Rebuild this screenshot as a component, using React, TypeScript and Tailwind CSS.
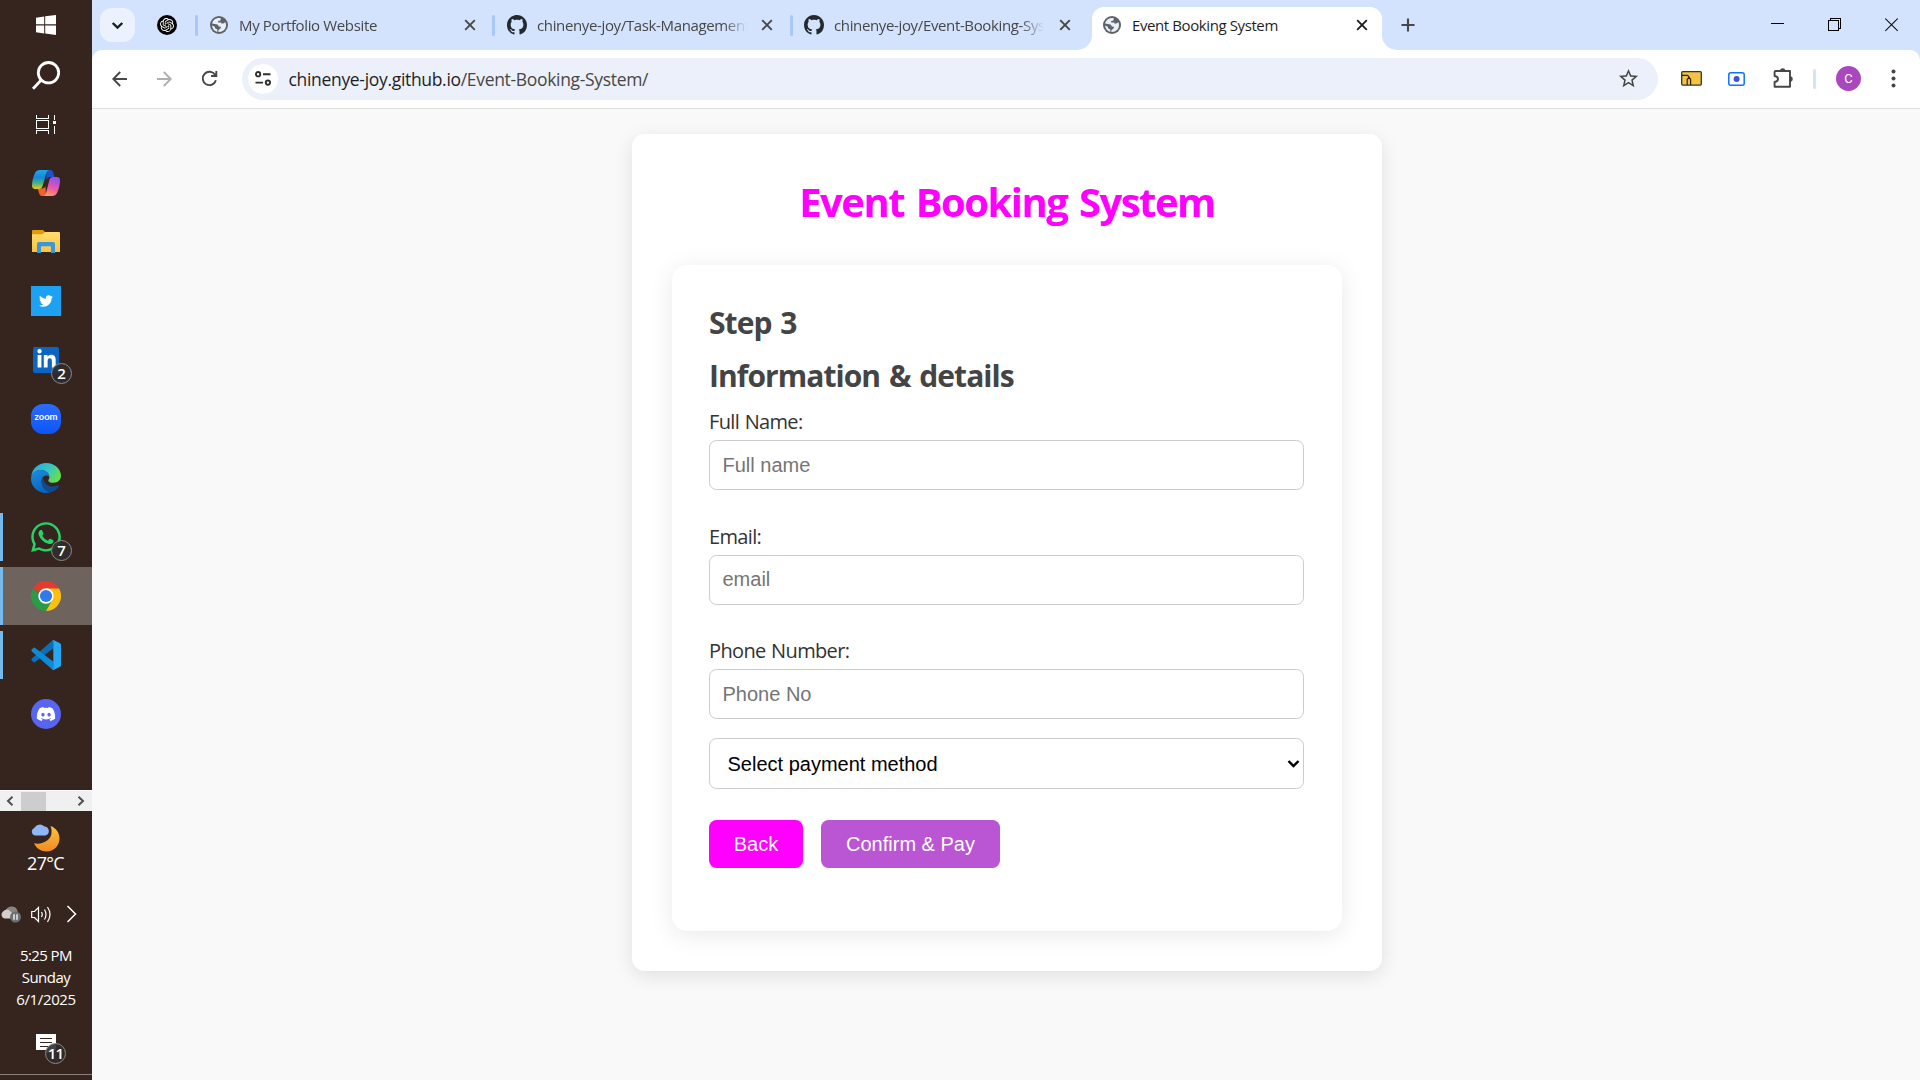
import type { ReactNode } from "react";
import { FaDiscord, FaLinkedinIn, FaTwitter, FaWhatsapp } from "react-icons/fa";
import { MdStarBorder } from "react-icons/md";
import { SiOpenai } from "react-icons/si";

function GlobeIcon() {
  return (
    <svg width="18" height="18" viewBox="0 0 18 18">
      <circle cx="9" cy="9" r="9" fill="#5f6368" />
      <path
        d="M10.6 2.1C6.6 1.3 3 3.600 2.100 7.500L6.300 8.300C7.900 8.600 8.600 9.400 8.700 10.500L10.900 10.800V12.100L8.400 14.200V16C13 16.200 16 13 16 9C16 7.900 15.700 6.900 15.300 6C13.900 7.300 12.900 7.900 11.300 7.400V6.600H8.200V5.100L10.600 4.600ZM2 9.600C2.400 13 4.400 15.200 7.300 15.900V13.500L4.900 12.300V10.800Z"
        fill="#e9effa"
      />
    </svg>
  );
}

function GithubMark() {
  return (
    <svg width="20" height="20" viewBox="0 0 16 16" fill="#24292f">
      <path d="M8 0c4.42 0 8 3.58 8 8a8.013 8.013 0 0 1-5.45 7.59c-.4.08-.55-.17-.55-.38 0-.27.01-1.13.01-2.2 0-.75-.25-1.23-.54-1.48 1.78-.2 3.65-.88 3.65-3.95 0-.88-.31-1.59-.82-2.15.08-.2.36-1.02-.08-2.12 0 0-.67-.22-2.2.82-.64-.18-1.32-.27-2-.27-.68 0-1.36.09-2 .27-1.53-1.03-2.2-.82-2.2-.82-.44 1.1-.16 1.92-.08 2.12-.51.56-.82 1.28-.82 2.15 0 3.06 1.86 3.75 3.64 3.95-.23.2-.44.55-.51 1.07-.46.21-1.61.55-2.33-.66-.15-.24-.6-.83-1.23-.82-.67.01-.27.38.01.53.34.19.73.9.82 1.13.16.45.68 1.31 2.69.94 0 .67.01 1.3.01 1.49 0 .21-.15.45-.55.38A7.995 7.995 0 0 1 0 8c0-4.42 3.58-8 8-8Z" />
    </svg>
  );
}

function CloseIcon({ color = "#474747" }: { color?: string }) {
  return (
    <svg width="20" height="20" viewBox="0 0 20 20" stroke={color} strokeWidth="1.9">
      <path d="M5.2 5.200 14.800 14.800M14.800 5.200 5.200 14.800" />
    </svg>
  );
}

function TabDivider() {
  return <div className="h-[21px] w-[3px] shrink-0 rounded-full bg-[#a8c7fa]" />;
}

function Tab({ icon, title, className }: { icon: ReactNode; title: string; className: string }) {
  return (
    <div className={`flex h-full shrink-0 items-center ${className}`}>
      <div className="flex w-5 shrink-0 justify-center">{icon}</div>
      <div className="ml-[10px] w-[210px] overflow-hidden text-[15px] leading-5 tracking-[-0.36px] whitespace-nowrap text-[#474747] [mask-image:linear-gradient(to_right,black_89%,transparent_100%)]">
        {title}
      </div>
      <div className="ml-auto">
        <CloseIcon />
      </div>
    </div>
  );
}

function TabStrip() {
  return (
    <div className="flex h-[50px] items-center bg-[#d3e3fd] pl-2">
      <div className="flex h-[34px] w-[35px] items-center justify-center rounded-[12px] bg-[#ebf2fe]">
        <svg width="13" height="9" viewBox="0 0 13 9" fill="none" stroke="#1f1f1f" strokeWidth="2.400">
          <path d="M1.700 2 6.500 6.600 11.300 2" />
        </svg>
      </div>
      <div className="mr-[18px] ml-[22px] flex size-5 items-center justify-center rounded-full bg-black">
        <SiOpenai size={14} color="#fff" />
      </div>
      <TabDivider />
      <Tab className="w-[294px] pr-[12px] pl-[11px]" icon={<GlobeIcon />} title="My Portfolio Website" />
      <TabDivider />
      <Tab className="w-[295px] pr-[13px] pl-[12px]" icon={<GithubMark />} title="chinenye-joy/Task-Management" />
      <TabDivider />
      <Tab className="w-[299px] pr-[17px] pl-[11px]" icon={<GithubMark />} title="chinenye-joy/Event-Booking-System" />
      <div className="relative flex h-[43px] w-[290px] shrink-0 items-center self-end rounded-t-[12px] bg-white px-[10px] pb-[7px]">
        <svg className="absolute bottom-0 -left-[15px]" width="15" height="15" viewBox="0 0 15 15" fill="#fff">
          <path d="M15 0A15 15 0 0 1 0 15H15Z" />
        </svg>
        <svg className="absolute -right-[15px] bottom-0" width="15" height="15" viewBox="0 0 15 15" fill="#fff">
          <path d="M0 0A15 15 0 0 0 15 15H0Z" />
        </svg>
        <div className="flex w-5 justify-center">
          <GlobeIcon />
        </div>
        <div className="ml-[10px] text-[15px] leading-5 tracking-[-0.4px] whitespace-nowrap text-[#1f1f1f]">
          Event Booking System
        </div>
        <div className="ml-auto">
          <CloseIcon color="#1f1f1f" />
        </div>
      </div>
      <svg className="ml-[19px]" width="14" height="14" viewBox="0 0 14 14" stroke="#474747" strokeWidth="2.100">
        <path d="M7 .5V13.500M.5 7H13.500" />
      </svg>
      <div className="mr-[22px] ml-auto flex items-center gap-[44px]">
        <svg width="13" height="14" viewBox="0 0 13 14" shapeRendering="crispEdges">
          <path d="M0 5H13V6H0Z" fill="#000" />
        </svg>
        <svg width="13" height="14" viewBox="0 0 13 14" fill="none" stroke="#000" shapeRendering="crispEdges">
          <path d="M.5 2.500H10.500V12.500H.5ZM2.500 2.500V.5H12.500V10.500H10.500" />
        </svg>
        <svg width="13" height="14" viewBox="0 0 13 14" stroke="#000" strokeWidth="1.050">
          <path d="M.3.500 12.700 12.900M12.700.500.3 12.900" />
        </svg>
      </div>
    </div>
  );
}

function Toolbar() {
  return (
    <div className="bg-[#d3e3fd]">
      <div className="flex h-[59px] items-center rounded-t-[10px] border-b border-[#dfdfdf] bg-white pb-px pl-5">
        <svg width="15" height="16" viewBox="0 0 15 16" fill="none" stroke="#474747" strokeWidth="1.900">
          <path d="M15 8H1.500M8.200 1 1.300 8 8.200 15" />
        </svg>
        <svg className="ml-[30px]" width="15" height="16" viewBox="0 0 15 16" fill="none" stroke="#b0b0b0" strokeWidth="1.900">
          <path d="M0 8H13.500M6.800 1 13.700 8 6.800 15" />
        </svg>
        <svg className="ml-[29px]" width="17" height="17" viewBox="0 0 17 17" fill="none" stroke="#474747" strokeWidth="1.900">
          <path d="M14.900 10.200A6.700 6.700 0 1 1 14.200 5M15.300.900V6H10" />
        </svg>
        <div className="ml-6 flex h-[42px] w-[1416px] shrink-0 items-center rounded-full bg-[#ecf0fa] pr-[18px] pl-[6px]">
          <div className="flex size-[30px] items-center justify-center rounded-full bg-white">
            <svg width="16" height="15" viewBox="0 0 16 15" fill="none" stroke="#303030" strokeWidth="1.900">
              <circle cx="3.100" cy="3.200" r="2.150" />
              <path d="M8 3.200H15.500M.5 11.600H8" />
              <circle cx="12.900" cy="11.600" r="2.150" />
            </svg>
          </div>
          <div className="ml-[10.5px] text-[17.5px] leading-6 tracking-[-0.32px] text-[#474747]">
            <span className="text-[#1f1f1f]">chinenye-joy.github.io</span>/Event-Booking-System/
          </div>
          <MdStarBorder className="ml-auto" size={23} color="#474747" />
        </div>
        <svg className="ml-[23px]" width="21" height="15" viewBox="0 0 21 15">
          <rect x=".7" y=".7" width="19.600" height="13.400" rx="1" fill="#f5c242" stroke="#333" strokeWidth="1.300" />
          <path d="M1 4.400H6.500L8.200 6M6.200 14V8.500L8 6.300 9.600 8.500V14" fill="none" stroke="#222" strokeWidth="1.200" />
        </svg>
        <svg className="ml-[26px]" width="17" height="14" viewBox="0 0 17 14">
          <rect x=".8" y=".8" width="15.400" height="12.400" rx="2" fill="#fff" stroke="#0b72ff" strokeWidth="1.500" />
          <circle cx="8.600" cy="7" r="3" fill="#3f51d8" />
        </svg>
        <svg className="ml-[27px] -translate-y-px" width="22" height="22" viewBox="0 0 22 22">
          <path
            d="M3.500 4H18V19.800H2.600V15C5.400 14.600 6 13.200 6 12C6 10.700 5.200 9.300 2.600 9V4.900Q2.600 4 3.500 4Z"
            fill="none"
            stroke="#474747"
            strokeWidth="1.900"
            strokeLinejoin="round"
          />
          <path d="M8 4A2.700 2.700 0 0 1 13.400 4ZM18 9.300A2.700 2.700 0 0 1 18 14.700Z" fill="#474747" />
        </svg>
        <div className="ml-[19px] h-5 w-[3px] rounded-full bg-[#d3e3fd]" />
        <div className="ml-5 flex size-[25px] items-center justify-center rounded-full bg-[#ab47bc] font-['Roboto'] text-[13px] text-white">
          C
        </div>
        <svg className="ml-[30px]" width="5" height="19" viewBox="0 0 5 19" fill="#474747">
          <circle cx="2.500" cy="2.600" r="2" />
          <circle cx="2.500" cy="9.500" r="2" />
          <circle cx="2.500" cy="16.400" r="2" />
        </svg>
      </div>
    </div>
  );
}

function Badge({ children, className }: { children: ReactNode; className: string }) {
  return (
    <span
      className={`absolute flex size-[21px] items-center justify-center rounded-full border border-[#8c8a88] bg-[#2f2d2c]/90 text-[15px] leading-none font-semibold text-white ${className}`}
    >
      {children}
    </span>
  );
}

function Slot({ children, active, running }: { children: ReactNode; active?: boolean; running?: boolean }) {
  return (
    <div className="relative flex h-[59px] w-full shrink-0 items-center justify-center">
      {active && <div className="absolute inset-x-0 top-px bottom-0 bg-[#6f645d]" />}
      {running && (
        <div className={`absolute left-0 w-[3px] bg-[#76b9ed] ${active ? "top-px bottom-0" : "top-[6px] bottom-[5px]"}`} />
      )}
      {children}
    </div>
  );
}

function Taskbar() {
  return (
    <aside className="flex h-[1080px] w-[92px] shrink-0 flex-col items-center overflow-hidden bg-[#36251e] text-white">
      <div className="flex h-[50px] items-center">
        <svg width="20" height="20" viewBox="0 0 20 20" fill="#fff">
          <path d="M0 2.700 8.200 1.500V9.300H0ZM9.200 1.300 20 0V9.300H9.200ZM0 10.400H8.200V18.400L0 17.300ZM9.200 10.400H20V20L9.200 18.600Z" />
        </svg>
      </div>
      <div className="flex h-[50px] items-center">
        <svg width="28" height="29" viewBox="0 0 28 29" fill="none" stroke="#fff" strokeWidth="2.800">
          <circle cx="16.500" cy="11.700" r="10.200" />
          <path d="M9.300 19 1 27.800" />
        </svg>
      </div>
      <div className="flex h-[49px] items-center">
        <svg width="20" height="19" viewBox="0 0 20 19" fill="none" stroke="#fff" shapeRendering="crispEdges">
          <path d="M.5 0V3.500H12.500V0M.5 5.500H12.500V13.500H.5ZM.5 19V15.500H12.500V19M18.500 0V4.500M18.500 10.500V19" />
          <path d="M17 6H20V9H17Z" fill="#fff" stroke="none" />
        </svg>
      </div>
      <div className="h-1 shrink-0" />
      <Slot>
        <svg width="28" height="28" viewBox="0 0 28 28">
          <defs>
            <linearGradient id="cpA" x1="0" y1="0" x2="0" y2="1">
              <stop offset="0" stopColor="#1ba8ee" />
              <stop offset=".4" stopColor="#1388d8" />
              <stop offset=".7" stopColor="#4db37c" />
              <stop offset="1" stopColor="#f2c811" />
            </linearGradient>
            <linearGradient id="cpB" x1=".3" y1="0" x2="0" y2="1">
              <stop offset="0" stopColor="#9a50ec" />
              <stop offset=".5" stopColor="#ee5aa0" />
              <stop offset="1" stopColor="#ffac55" />
            </linearGradient>
          </defs>
          <path d="M14 1H18C20 1 20.800 2.200 21.300 4L22.500 8H18C16 8 15.200 9 14.600 11Z" fill="#1a54c8" />
          <path d="M14 27H10C8.400 27 7.500 26 7 24L5.800 19.500H10C12 19.500 13 18.500 13.500 17Z" fill="#f4602d" />
          <path d="M8 1H17.500C15.500 1 14.800 2.500 14.200 4.500L10.600 17C10 19 9 20 7 20H3C1 20 0 18.500 0 16.500C0 12.500 1.300 7.500 3 4C4 2 5.500 1 8 1Z" fill="url(#cpA)" />
          <path d="M20 27H11C13 27 13.600 25.500 14.200 23.500L17.400 11C18 9 19 8 21 8H25C27 8 28 9.500 28 11.500C28 15.500 26.700 20.500 25 24C24 26 22.500 27 20 27Z" fill="url(#cpB)" />
        </svg>
      </Slot>
      <Slot>
        <svg width="28" height="23" viewBox="0 0 28 23">
          <defs>
            <linearGradient id="folder" x1="0" y1="0" x2="0" y2="1">
              <stop offset="0" stopColor="#ffdc6e" />
              <stop offset="1" stopColor="#f8c441" />
            </linearGradient>
          </defs>
          <path d="M0 1Q0 0 1 0H11L13.500 2.500 11 5H0Z" fill="#e09b06" />
          <path d="M0 4.300H10.500L13 2H27Q28 2 28 3V22H0Z" fill="url(#folder)" />
          <path d="M5 23V14Q5 12 7 12H21Q23 12 23 14V23H19V17Q19 16.300 18.300 16.300H9.700Q9 16.300 9 17V23Z" fill="#3a96dd" />
        </svg>
      </Slot>
      <Slot>
        <div className="flex size-[30px] items-center justify-center bg-[#1da1f2]">
          <FaTwitter size={14} color="#fff" />
        </div>
      </Slot>
      <Slot>
        <div className="flex size-[26px] items-center justify-center rounded-[2px] bg-[#0a66c2]">
          <FaLinkedinIn size={21} color="#fff" />
        </div>
        <Badge className="top-[33px] left-[51px]">2</Badge>
      </Slot>
      <Slot>
        <div className="flex size-[30px] items-center justify-center rounded-[12px] bg-gradient-to-b from-[#2b6cff] to-[#0b55f5] pb-[3px] font-['Lato'] text-[9.5px] leading-none font-bold">
          zoom
        </div>
      </Slot>
      <Slot>
        <svg width="30" height="30" viewBox="0 0 30 30">
          <defs>
            <linearGradient id="edA" x1="0" y1=".2" x2="1" y2=".7">
              <stop offset="0" stopColor="#2ba9e0" />
              <stop offset=".5" stopColor="#35c6c4" />
              <stop offset="1" stopColor="#6ee03f" />
            </linearGradient>
            <linearGradient id="edB" x1="0" y1="0" x2=".4" y2="1">
              <stop offset="0" stopColor="#1a8fe0" />
              <stop offset="1" stopColor="#0c65bd" />
            </linearGradient>
          </defs>
          <path d="M.3 13C1.200 5.500 7.500 0 15 0C23.500 0 30 6 30 12.800C30 17 26.600 19.800 22.600 19.800C19.500 19.800 17.300 18.700 17.300 17.400C17.300 16.500 18.400 16.200 18.400 14.400C18.400 10 14.500 7 9.500 7C5.500 7 2 9.300.3 13Z" fill="url(#edA)" />
          <path d="M15 30C6.500 30 0 23.500 0 15.500C0 10.300 4.200 7 9.500 7C14.300 7 18.400 9.800 18.400 14C16.800 11.700 12.500 12 11 15.500C9.500 19.500 11.500 27 19.500 29.300C18.200 29.800 16.500 30 15 30Z" fill="url(#edB)" />
          <path d="M12.400 13.400C8.500 19 12 28 19.500 29.300C23 28.500 26.300 26 28 23C28.300 22.300 27.700 22 27.100 22.300C19.500 25.800 12 21.500 12.400 13.400Z" fill="#0d4c94" />
        </svg>
      </Slot>
      <Slot running>
        <FaWhatsapp size={34} color="#25d366" />
        <Badge className="top-[33px] left-[51px]">7</Badge>
      </Slot>
      <Slot active running>
        <svg className="relative" width="30" height="30" viewBox="0 0 48 48">
          <path d="M24 24 3.200 12A24 24 0 0 1 44.800 12Z" fill="#e33b2e" />
          <path d="M24 24H14L3.200 12A24 24 0 0 0 24 48L34 30Z" fill="#2a9b46" />
          <path d="M24 12H44.800A24 24 0 0 1 24 48L34.400 30Z" fill="#fdc010" />
          <circle cx="24" cy="24" r="12.300" fill="#fff" />
          <circle cx="24" cy="24" r="9.700" fill="#2f7bea" />
        </svg>
      </Slot>
      <Slot running>
        <svg width="30" height="30" viewBox="0 0 30 30">
          <path d="M1 20.700 2.600 22.200Q3.400 22.700 4.200 22.100L22.500 8.200V.300Q22 0 21.300.4L.9 18.600Q-.2 19.600 1 20.700Z" fill="#0a6fb5" />
          <path d="M1 9.300 2.600 7.800Q3.400 7.300 4.200 7.900L22.500 21.700V29.500Q22 30 21.300 29.600L.9 11.400Q-.2 10.400 1 9.300Z" fill="#0d8bd6" />
          <path d="M21.500 0Q22.200-.1 23 .3L29 3.200Q30 3.700 30 4.800V25.200Q30 26.300 29 26.800L23 29.700Q22 30.200 21.200 29.600Q22.300 29.700 22.300 28.200V1.800Q22.300.6 21.500 0Z" fill="#27a8f2" />
        </svg>
      </Slot>
      <Slot>
        <div className="flex size-[30px] items-center justify-center rounded-full bg-[#5865f2]">
          <FaDiscord size={20} color="#fff" />
        </div>
      </Slot>

      <div className="mt-[47px] flex h-[21px] w-full shrink-0 items-center border-t border-white bg-[#f0f0f0]">
        <svg className="ml-[6px]" width="8" height="10" viewBox="0 0 8 10" fill="none" stroke="#505050" strokeWidth="2">
          <path d="M6.500.8 2 5 6.500 9.200" />
        </svg>
        <div className="ml-[7px] h-[19px] w-[25px] bg-[#cdcdcd]" />
        <svg className="ml-[31px]" width="8" height="10" viewBox="0 0 8 10" fill="none" stroke="#505050" strokeWidth="2">
          <path d="M1.500.8 6 5 1.500 9.200" />
        </svg>
      </div>

      <svg className="mt-[13px] shrink-0" width="30" height="28" viewBox="0 0 30 28">
        <defs>
          <linearGradient id="moon" x1="0" y1="0" x2="0" y2="1">
            <stop offset="0" stopColor="#fbc53a" />
            <stop offset="1" stopColor="#f08a24" />
          </linearGradient>
        </defs>
        <path d="M19.500 2C25 4 28.500 8.500 28.500 14.500C28.500 21.500 22.800 27.500 15.500 27.500C10 27.500 5.300 24.500 3 19.300C12 21 20 16 20.500 9C20.700 6.500 20.400 4 19.500 2Z" fill="url(#moon)" />
        <path d="M4 11.500A4 4 0 0 1 3.500 3.800A6 5.500 0 0 1 13.500 2.500A4.600 4.600 0 0 1 14.500 11.500Z" fill="#8fb7f5" />
      </svg>
      <div className="h-[22px] shrink-0 pr-px text-[18px] leading-[22px] tracking-[-0.7px]">27°C</div>

      <div className="mt-[29px] flex h-[22px] w-full shrink-0 items-center">
        <svg width="21" height="18" viewBox="-1 0 21 18">
          <path d="M5 5A6 5.500 0 0 1 16.500 6L17 9H8Z" fill="#8c8580" />
          <path d="M3.500 13.500A4 4 0 0 1 2 6.500Q6 2.500 9.500 6.500L15 11V13.500Z" fill="#d2cfcd" />
          <circle cx="14.500" cy="12" r="5.500" fill="#6c7074" />
          <path d="M13 9.300V14.700M16 9.300V14.700" stroke="#fff" strokeWidth="1.300" />
        </svg>
        <svg className="ml-[10px]" width="22" height="19" viewBox="0 0 22 19" fill="none" stroke="#fff" strokeWidth="1.200">
          <path d="M.7 6.500H3.500L7.500 2.500V16.500L3.500 12.500H.7ZM10.500 7Q12 9.500 10.500 12M13.500 4.500Q16.500 9.500 13.500 14.500M16.500 2Q21.500 9.500 16.500 17" />
        </svg>
        <svg className="ml-[13px]" width="11" height="18" viewBox="0 0 11 18" fill="none" stroke="#fff" strokeWidth="1.500">
          <path d="M1.500 1 9.500 9 1.500 17" />
        </svg>
      </div>

      <div className="mt-[19px] shrink-0 text-center text-[15px] leading-[22px]">
        <div className="tracking-[-0.6px]">5:25 PM</div>
        <div className="tracking-[-0.5px]">Sunday</div>
        <div className="tracking-[-0.36px]">6/1/2025</div>
      </div>

      <div className="relative mt-[24px] h-[40px] w-[20px] shrink-0">
        <svg width="20" height="22" viewBox="0 0 20 22">
          <path d="M0 0H20V16H15L10.500 20.500V16H0Z" fill="#fff" />
          <path d="M4 4.500H16M4 8.500H16M4 12.500H12" stroke="#36251e" strokeWidth="1.200" />
        </svg>
        <Badge className="top-[9px] left-[9px] tracking-[-0.8px]">11</Badge>
      </div>
      <div className="h-px w-full shrink-0 bg-[#8a817c]" />
    </aside>
  );
}

function Field({ label, placeholder }: { label: string; placeholder: string }) {
  return (
    <div>
      <label className="block text-[20px] leading-[27px] tracking-[-0.65px] text-[#333] [word-spacing:1px]">{label}</label>
      <input
        placeholder={placeholder}
        className="mt-[5px] block h-[50px] w-full rounded-[7.5px] border border-[#ccc] bg-white px-[12.5px] font-['Liberation_Sans'] text-[20px] outline-none placeholder:text-[#757575]"
      />
    </div>
  );
}

function BookingPage() {
  return (
    <main className="flex flex-1 flex-col items-center bg-[#f9f9f9] pt-[25px] pl-[2px]">
      <div className="h-[837px] w-[750px] rounded-[12.5px] bg-white px-[40px] pt-[40px] shadow-[0_5px_19px_rgba(0,0,0,0.1)]">
        <h1 className="text-center text-[40px] leading-[55px] font-bold tracking-[-1.55px] text-[#ff00ff] [word-spacing:3px]">
          Event Booking System
        </h1>
        <section className="mt-[36px] h-[666px] rounded-[15px] bg-white pt-[38px] pr-[38px] pl-[37px] shadow-[0_4px_25px_rgba(0,0,0,0.09)]">
          <h2 className="text-[30px] leading-[40px] font-bold tracking-[-0.95px] text-[#444] [word-spacing:2px]">Step 3</h2>
          <h2 className="mt-[13px] text-[30px] leading-[40px] font-bold tracking-[-0.95px] text-[#444] [word-spacing:2px]">
            Information &amp; details
          </h2>
          <div className="mt-[12px] flex flex-col gap-[32.5px]">
            <Field label="Full Name:" placeholder="Full name" />
            <Field label="Email:" placeholder="email" />
            <Field label="Phone Number:" placeholder="Phone No" />
          </div>
          <div className="relative mt-[19px]">
            <select className="block h-[51px] w-full appearance-none rounded-[7.5px] border border-[#ccc] bg-white px-[17.5px] font-['Liberation_Sans'] text-[20px] text-black">
              <option>Select payment method</option>
            </select>
            <svg className="pointer-events-none absolute top-[21px] right-[4px]" width="13" height="10" viewBox="0 0 13 10" fill="none" stroke="#000" strokeWidth="2.400">
              <path d="M1.500 2 6.500 7 11.500 2" />
            </svg>
          </div>
          <div className="mt-[31px] flex gap-[18px] font-['Liberation_Sans'] text-[20px] text-white">
            <button className="h-[48px] w-[94px] rounded-[7.5px] bg-[#ff00ff]">Back</button>
            <button className="h-[48px] w-[179px] rounded-[7.5px] bg-[#ba55d3]">Confirm &amp; Pay</button>
          </div>
        </section>
      </div>
    </main>
  );
}

export default function App() {
  return (
    <div className="flex h-[1080px] w-[1920px] overflow-hidden bg-[#f9f9f9] font-['Open_Sans',sans-serif]">
      <Taskbar />
      <div className="flex flex-1 flex-col">
        <TabStrip />
        <Toolbar />
        <BookingPage />
      </div>
    </div>
  );
}
